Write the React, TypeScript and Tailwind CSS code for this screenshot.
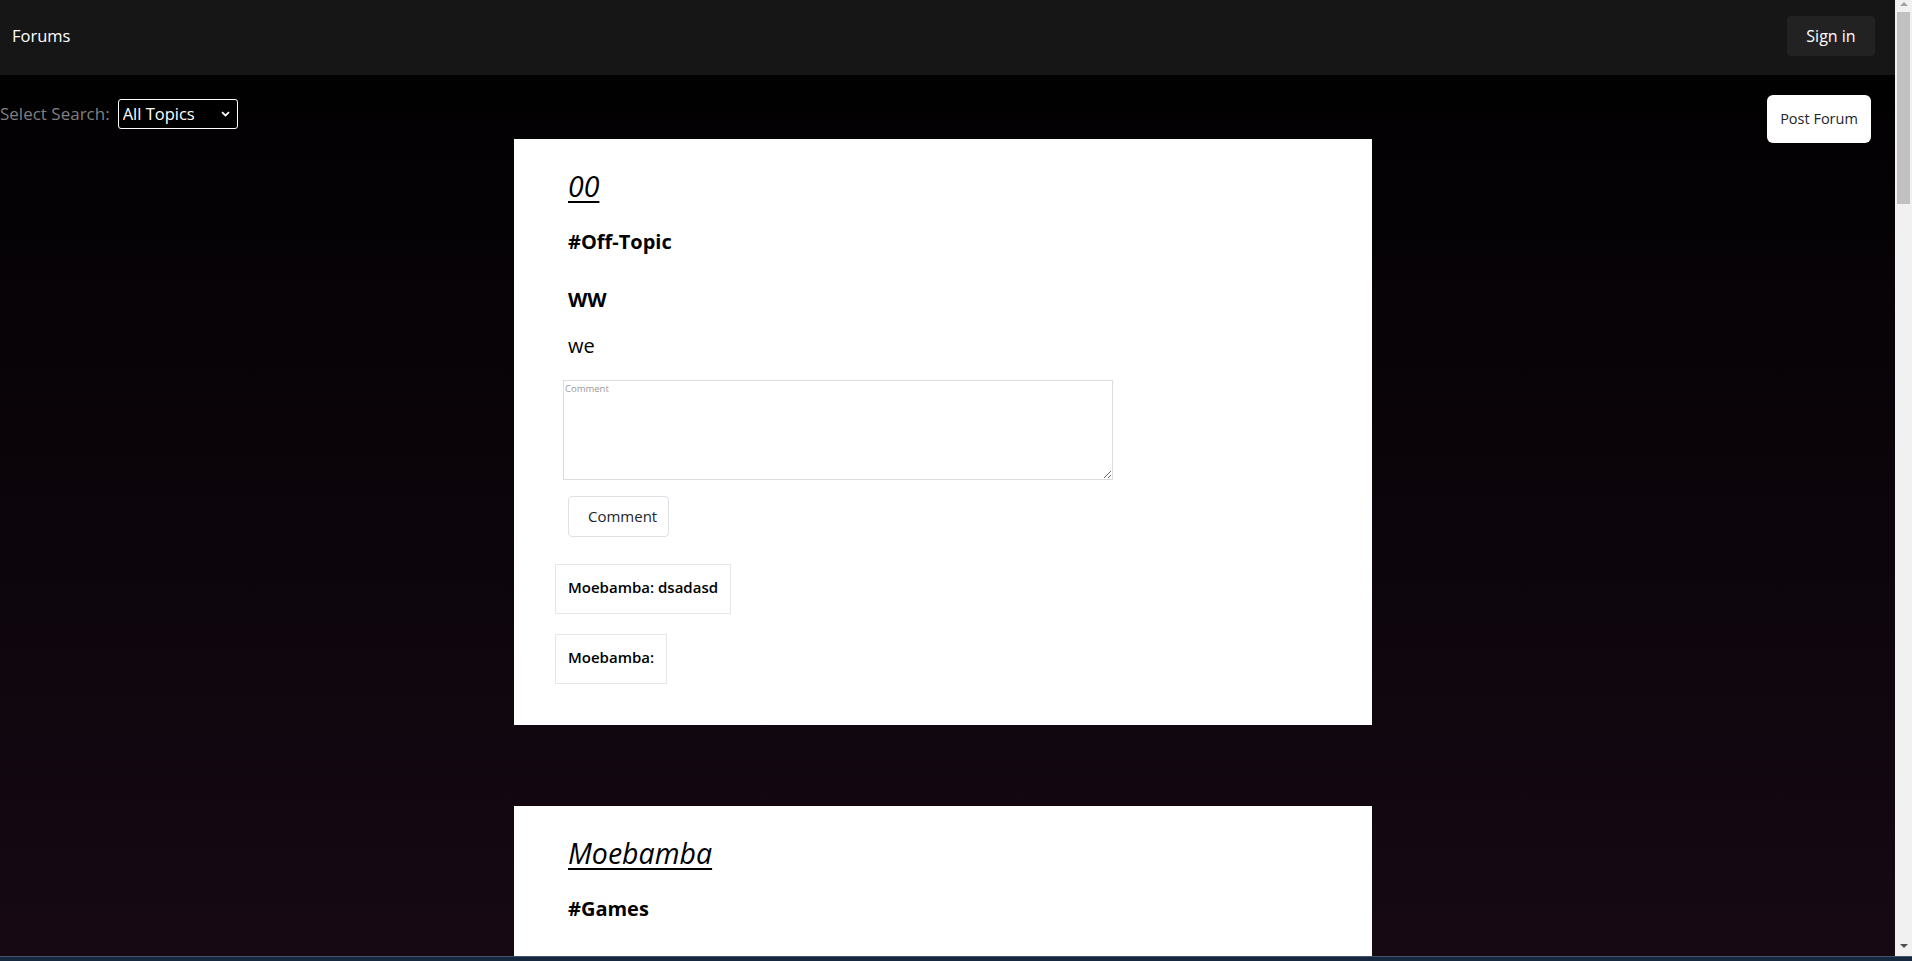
import { useState } from 'react';

interface Comment {
  id: number;
  author: string;
  text: string;
}

interface Forum {
  id: number;
  title: string;
  topic: string;
  heading: string;
  body: string;
  comments: Comment[];
}

const forums: Forum[] = [
  {
    id: 1,
    title: '00',
    topic: '#Off-Topic',
    heading: 'WW',
    body: 'we',
    comments: [
      { id: 1, author: 'Moebamba', text: 'dsadasd' },
      { id: 2, author: 'Moebamba', text: '' },
    ],
  },
  {
    id: 2,
    title: 'Moebamba',
    topic: '#Games',
    heading: 'This is',
    body: 'a forum post',
    comments: [],
  },
];

const ForumCard = ({ forum }: { forum: Forum }) => {
  const [draft, setDraft] = useState('');

  return (
    <div className="ml-[514px] w-[858px] shrink-0 bg-white pb-[41px] pl-[54px] pt-[30px] text-black">
      <h2 className="text-[28.5px] italic leading-[34px] underline decoration-2 underline-offset-[4px]">
        {forum.title}
      </h2>
      <h4 className="mt-[25px] text-[20px] font-bold leading-[28px]">{forum.topic}</h4>
      <h3 className="mt-[30px] text-[20px] font-bold leading-[28px]">{forum.heading}</h3>
      <p className="mt-[18px] text-[20px] leading-[28px]">{forum.body}</p>

      <textarea
        value={draft}
        onChange={(e) => setDraft(e.target.value)}
        placeholder="Comment"
        className="-ml-[5px] mt-[20px] block h-[100px] w-[550px] resize border border-[#dcdcdc] px-[1px] pt-[2px] text-[9.5px] leading-[12px] placeholder:text-[#9a9a9a]"
      />
      <button
        type="button"
        className="mt-[16px] block h-[41px] w-[101px] rounded-[4px] border border-[#dee2e6] pl-[19px] pr-[8px] text-left text-[15px] text-[#212529]"
      >
        Comment
      </button>

      {forum.comments.map((c, i) => (
        <div
          key={c.id}
          className={`-ml-[13px] flex h-[50px] w-fit items-center border border-[#e6e6e6] px-[12px] pb-[3px] text-[15px] font-semibold ${
            i === 0 ? 'mt-[27px]' : 'mt-[20px]'
          }`}
        >
          {c.author}: {c.text}
        </div>
      ))}
    </div>
  );
};

const Scrollbar = () => (
  <div className="flex h-full w-[17px] shrink-0 flex-col items-center bg-[#f1f1f1]">
    <div className="mt-[2px] h-0 w-0 border-x-[4px] border-b-[4px] border-x-transparent border-b-[#a3a3a3]" />
    <div className="mt-[6px] h-[192px] w-[13px] bg-[#c1c1c1]" />
    <div className="flex-1" />
    <div className="mb-[8px] h-0 w-0 border-x-[4px] border-t-[4px] border-x-transparent border-t-[#505050]" />
  </div>
);

export default function App() {
  return (
    <div
      className="flex h-screen w-full flex-col overflow-hidden bg-black"
      style={{ fontFamily: '"Open Sans", "Noto Sans", sans-serif' }}
    >
      <div className="flex min-h-0 flex-1">
        <div className="flex min-w-0 flex-1 flex-col overflow-hidden bg-[linear-gradient(to_bottom,#000000,#160914)]">
          {/* Navbar */}
          <nav className="flex h-[75px] shrink-0 items-center justify-between bg-[#161616] pb-[3px] pl-[12px] pr-[20px]">
            <span className="text-[16.5px] text-white">Forums</span>
            <button
              type="button"
              className="h-[40px] w-[88px] rounded-[4px] bg-[#222222] text-[16px] text-white"
            >
              Sign in
            </button>
          </nav>

          {/* Filter row */}
          <div className="flex h-[64px] shrink-0 items-start justify-between">
            <div className="mt-[24px] flex items-center">
              <label className="text-[17px] leading-[30px] text-[#808080]">Select Search:</label>
              <div className="relative ml-[8px]">
                <select className="h-[30px] w-[120px] appearance-none rounded-[3px] border border-white bg-black pl-[4px] text-[16.5px] text-white outline-none">
                  <option>All Topics</option>
                  <option>Games</option>
                  <option>Off-Topic</option>
                </select>
                <svg
                  className="pointer-events-none absolute right-[8px] top-[12px]"
                  width="9"
                  height="6"
                  viewBox="0 0 9 6"
                  fill="none"
                >
                  <path d="M1 1.2L4.5 4.5L8 1.2" stroke="white" strokeWidth="1.8" />
                </svg>
              </div>
            </div>
            <button
              type="button"
              className="mr-[24px] mt-[20px] h-[48px] w-[104px] rounded-[6px] bg-white text-[14.5px] text-[#212529]"
            >
              Post Forum
            </button>
          </div>

          {/* Forum list */}
          <div className="flex flex-col gap-[81px]">
            {forums.map((f) => (
              <ForumCard key={f.id} forum={f} />
            ))}
          </div>
        </div>
        <Scrollbar />
      </div>
      <div className="h-[5px] shrink-0 border-t border-[#46526a] bg-[#16283f]" />
    </div>
  );
}
